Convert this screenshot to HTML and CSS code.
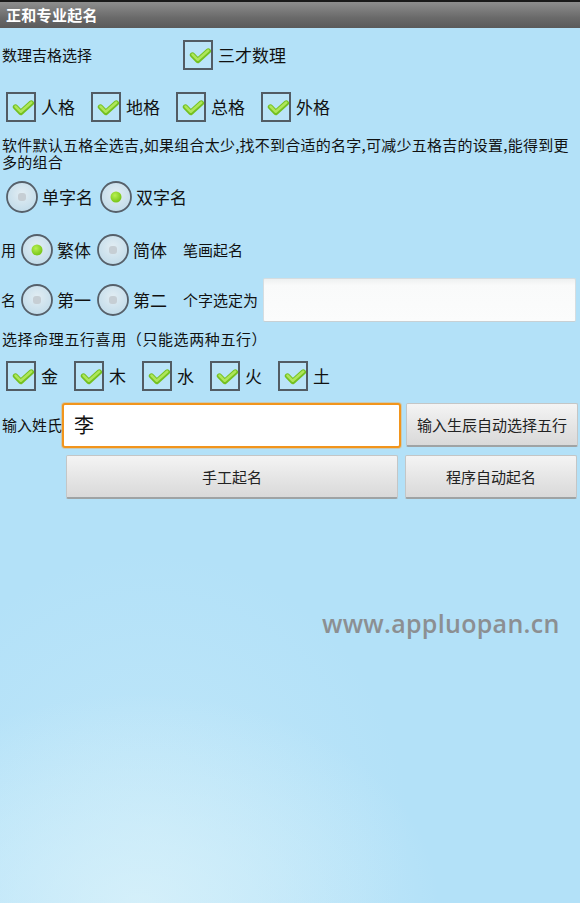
FILE: index.html
```html
<!DOCTYPE html>
<html lang="zh">
<head>
<meta charset="utf-8">
<title>正和专业起名</title>
<link rel="stylesheet" href="styles.css">
</head>
<body>
<svg width="0" height="0" class="defs">
  <defs>
    <symbol id="cb" viewBox="0 0 32 32">
      <rect x="2" y="2" width="28" height="28" fill="rgba(255,255,255,0.1)" stroke="#525c64" stroke-width="2"/>
      <path d="M10.5 16 L15.8 21.5 L26.3 12" fill="none" stroke="#74c020" stroke-width="5.4" stroke-linecap="round" stroke-linejoin="round"/>
      <path d="M10.5 15.5 L15.8 20.8 L26.3 11.5" fill="none" stroke="#aee65a" stroke-width="2.5" stroke-linecap="round" stroke-linejoin="round"/>
    </symbol>
    <radialGradient id="rg" cx="50%" cy="40%" r="60%">
      <stop offset="0" stop-color="#e2edf3"/>
      <stop offset="1" stop-color="#c2dcea"/>
    </radialGradient>
    <radialGradient id="gd" cx="40%" cy="35%" r="60%">
      <stop offset="0" stop-color="#b8f050"/>
      <stop offset="1" stop-color="#7cc81c"/>
    </radialGradient>
    <symbol id="ron" viewBox="0 0 34 34">
      <circle cx="17" cy="17" r="15" fill="url(#rg)" stroke="#56606a" stroke-width="1.8"/>
      <circle cx="17" cy="17" r="5.5" fill="url(#gd)"/>
    </symbol>
    <symbol id="roff" viewBox="0 0 34 34">
      <circle cx="17" cy="17" r="15" fill="url(#rg)" stroke="#56606a" stroke-width="1.8"/>
      <rect x="13" y="13" width="8" height="8" rx="3" fill="#c6ced4"/>
    </symbol>
  </defs>
</svg>

<header class="titlebar">正和专业起名</header>

<div class="row r1">
  <span class="lbl15 w180">数理吉格选择</span>
  <span class="opt"><svg class="cb"><use href="#cb"/></svg><span class="t17">三才数理</span></span>
</div>

<div class="row r2">
  <span class="opt w85"><svg class="cb"><use href="#cb"/></svg><span class="t17">人格</span></span>
  <span class="opt w85"><svg class="cb"><use href="#cb"/></svg><span class="t17">地格</span></span>
  <span class="opt w85"><svg class="cb"><use href="#cb"/></svg><span class="t17">总格</span></span>
  <span class="opt w85"><svg class="cb"><use href="#cb"/></svg><span class="t17">外格</span></span>
</div>

<p class="note">软件默认五格全选吉,如果组合太少,找不到合适的名字,可减少五格吉的设置,能得到更多的组合</p>

<div class="row r3">
  <span class="opt"><svg class="rb"><use href="#roff"/></svg><span class="t17 gap6">单字名</span></span>
  <span class="opt"><svg class="rb"><use href="#ron"/></svg><span class="t17">双字名</span></span>
</div>

<div class="row r4">
  <span class="lbl15 lead">用</span>
  <span class="opt"><svg class="rb"><use href="#ron"/></svg><span class="t17 w34">繁体</span></span>
  <span class="opt o2"><svg class="rb"><use href="#roff"/></svg><span class="t17 w34">简体</span></span>
  <span class="lbl15 ml">笔画起名</span>
</div>

<div class="row r5">
  <span class="lbl15 lead">名</span>
  <span class="opt"><svg class="rb"><use href="#roff"/></svg><span class="t17 w34">第一</span></span>
  <span class="opt o2"><svg class="rb"><use href="#roff"/></svg><span class="t17 w34">第二</span></span>
  <span class="lbl15 ml">个字选定为</span>
  <span class="field"></span>
</div>

<div class="row r6"><span class="lbl15 head">选择命理五行喜用（只能选两种五行）</span></div>

<div class="row r7">
  <span class="opt w68"><svg class="cb"><use href="#cb"/></svg><span class="t17">金</span></span>
  <span class="opt w68"><svg class="cb"><use href="#cb"/></svg><span class="t17">木</span></span>
  <span class="opt w68"><svg class="cb"><use href="#cb"/></svg><span class="t17">水</span></span>
  <span class="opt w68"><svg class="cb"><use href="#cb"/></svg><span class="t17">火</span></span>
  <span class="opt w68"><svg class="cb"><use href="#cb"/></svg><span class="t17">土</span></span>
</div>

<div class="row r8">
  <span class="lbl15 w60">输入姓氏</span>
  <span class="surname">李</span>
  <button class="btn bw">输入生辰自动选择五行</button>
</div>

<div class="row r9">
  <button class="btn b1">手工起名</button>
  <button class="btn bw">程序自动起名</button>
</div>

<div class="watermark">www.appluopan.cn</div>
</body>
</html>
```

FILE: styles.css
```css
html, body {
  margin: 0;
  padding: 0;
  height: 903px;
  overflow: hidden;
}
body {
  font-family: "Noto Sans CJK SC", "Noto Sans", sans-serif;
  color: #111;
  background:
    radial-gradient(ellipse 300px 210px at 140px 903px, rgba(218,242,250,0.8), rgba(218,242,250,0) 100%),
    radial-gradient(ellipse 260px 280px at 150px 830px, rgba(204,236,250,0.5), rgba(204,236,250,0) 100%),
    #b3e1f8;
}
.defs { position: absolute; width: 0; height: 0; }

.titlebar {
  height: 28px;
  box-sizing: border-box;
  border-top: 2px solid #1a1a1a;
  background: linear-gradient(#8e8e8e, #6a6a6a 60%, #5a5a5a);
  color: #fff;
  font-weight: bold;
  font-size: 15px;
  line-height: 25px;
  padding-left: 6px;
  letter-spacing: 0.3px;
}

.row {
  display: flex;
  align-items: center;
  white-space: nowrap;
}
.row > * { flex-shrink: 0; }
.r1 { height: 54px; padding-left: 2px; }
.r2 { height: 50px; padding-left: 5px; }
.r3 { height: 54px; padding-left: 5px; }
.r4 { height: 52px; padding-left: 1px; }
.r5 { height: 48px; padding-left: 1px; }
.r6 { height: 30px; padding-left: 2px; }
.r7 { height: 44px; padding-left: 5px; }
.r8 { height: 46px; margin-top: 4px; padding-left: 2px; }
.r9 { height: 45px; margin-top: 6px; padding-left: 66px; }

.lbl15 { font-size: 15px; line-height: 20px; }
.w180 { width: 180px; }
.w60 { width: 60px; }
.lead { width: 19px; }
.head { letter-spacing: 0.6px; }
.ml { margin-left: 16px; }

.opt {
  display: inline-flex;
  align-items: center;
}
.o2 { margin-left: 5px; }
.w85 { width: 85px; }
.w68 { width: 68px; }
.w34 { width: 34px; }
.gap6 { margin-right: 6px; }
.t17 { font-size: 17px; line-height: 22px; }

.cb {
  width: 32px;
  height: 32px;
  margin-right: 4px;
}
.rb {
  width: 34px;
  height: 34px;
  margin-right: 3px;
}

.note {
  margin: 4px 0 0 2px;
  font-size: 15px;
  line-height: 17px;
  height: 34px;
  letter-spacing: 0.25px;
}

.field {
  margin-left: 5px;
  width: 313px;
  height: 44px;
  box-sizing: border-box;
  background: linear-gradient(#eef0f0, #f9fafa 15%, #fbfcfc);
  border: 1px solid #d6dde0;
  border-bottom-color: #c8d0d4;
  border-radius: 2px;
}

.surname {
  width: 339px;
  height: 45px;
  box-sizing: border-box;
  background: #fff;
  border: 2px solid #f2951c;
  border-radius: 3px;
  box-shadow: 0 0 0 1px rgba(242,160,60,0.35);
  font-size: 20px;
  line-height: 40px;
  padding-left: 10px;
  color: #111;
}

.btn {
  font-family: "Noto Sans CJK SC", "Noto Sans", sans-serif;
  font-size: 15px;
  color: #222;
  height: 44px;
  box-sizing: border-box;
  border: 1px solid #c4c6c6;
  border-bottom: 2px solid #9fa3a4;
  border-radius: 2px;
  background: linear-gradient(#f4f4f4, #e6e6e6 50%, #d9d9d9);
  padding: 0;
}
.bw { width: 172px; }
.r8 .bw { margin-left: 5px; }
.b1 { width: 332px; }
.r9 .bw { margin-left: 7px; }

.watermark {
  margin: 107px 0 0 322px;
  font-family: "Open Sans", "DejaVu Sans", sans-serif;
  font-weight: 600;
  font-size: 25px;
  color: #8c8f92;
  letter-spacing: 0.3px;
}
```
